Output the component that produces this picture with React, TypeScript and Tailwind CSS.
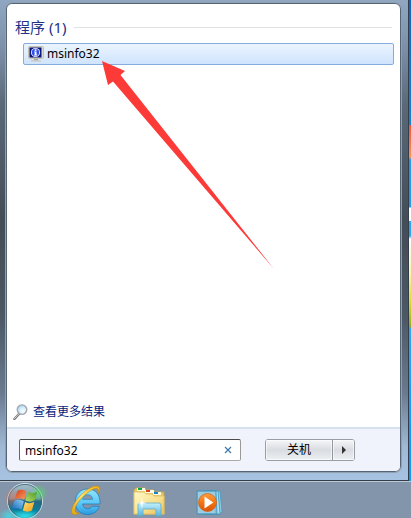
import { useState } from "react";

const uiFont = "font-['Noto_Sans','Noto_Sans_CJK_SC',sans-serif]";

function SystemInfoIcon() {
  return (
    <svg width="16" height="16" viewBox="0 0 16 16" aria-hidden="true" className="shrink-0">
      <rect x="0.5" y="0.5" width="15" height="12" rx="1" fill="#dcd9cf" stroke="#c3c0b4" />
      <rect x="1.5" y="1.5" width="12" height="10" fill="#0a1478" />
      <circle cx="7.5" cy="6.5" r="4.6" fill="#eef2ff" />
      <circle cx="7.5" cy="6.5" r="3.7" fill="#3050f0" />
      <rect x="6.7" y="3.4" width="1.8" height="1.5" fill="#fff" />
      <path d="M6.1 5.6h2.4v3h.7v1H6v-1h.8v-2h-.7z" fill="#fff" />
      <path d="M6 13h4v1.4H6z" fill="#aaa799" />
      <path d="M3 14.2h10v1.3H3z" fill="#c9c6bb" />
    </svg>
  );
}

function MagnifierIcon() {
  return (
    <svg width="16" height="16" viewBox="0 0 16 16" aria-hidden="true" className="shrink-0">
      <defs>
        <radialGradient id="lens" cx="0.6" cy="0.65" r="0.7">
          <stop offset="0" stopColor="#ffffff" />
          <stop offset="0.5" stopColor="#d3ecfc" />
          <stop offset="1" stopColor="#9ccbf0" />
        </radialGradient>
      </defs>
      <path d="M6 10 1.4 15" stroke="#777" strokeWidth="2.4" strokeLinecap="round" />
      <path d="M5.6 10.2 1.5 14.6" stroke="#d8d8d8" strokeWidth="0.9" strokeLinecap="round" />
      <circle cx="9" cy="5.6" r="4.8" fill="url(#lens)" stroke="#a2a7ad" strokeWidth="1.3" />
    </svg>
  );
}

function StartOrb() {
  return (
    <svg width="48" height="36" viewBox="0 0 48 36" aria-hidden="true">
      <defs>
        <linearGradient id="orb" x1="0" y1="0" x2="0" y2="1">
          <stop offset="0" stopColor="#a7bfca" />
          <stop offset="0.42" stopColor="#7698a5" />
          <stop offset="0.5" stopColor="#2a6580" />
          <stop offset="0.75" stopColor="#087f9b" />
          <stop offset="1" stopColor="#2ed3de" />
        </linearGradient>
        <radialGradient id="glowGreen">
          <stop offset="0" stopColor="#4ee85c" stopOpacity="0.65" />
          <stop offset="1" stopColor="#4ee85c" stopOpacity="0" />
        </radialGradient>
        <radialGradient id="glowRed">
          <stop offset="0" stopColor="#e27864" stopOpacity="0.6" />
          <stop offset="1" stopColor="#e27864" stopOpacity="0" />
        </radialGradient>
        <radialGradient id="glowCyan">
          <stop offset="0" stopColor="#31edf4" stopOpacity="0.7" />
          <stop offset="1" stopColor="#31edf4" stopOpacity="0" />
        </radialGradient>
        <linearGradient id="flagRed" x1="0" y1="0" x2="1" y2="1">
          <stop offset="0" stopColor="#d83b1b" />
          <stop offset="1" stopColor="#f8a15d" />
        </linearGradient>
        <linearGradient id="flagGreen" x1="1" y1="0" x2="0" y2="1">
          <stop offset="0" stopColor="#4b9b20" />
          <stop offset="1" stopColor="#b8dc6a" />
        </linearGradient>
        <linearGradient id="flagBlue" x1="0" y1="1" x2="1" y2="0">
          <stop offset="0" stopColor="#1662bd" />
          <stop offset="1" stopColor="#8fd0f4" />
        </linearGradient>
        <linearGradient id="flagYellow" x1="1" y1="1" x2="0" y2="0">
          <stop offset="0" stopColor="#f39b13" />
          <stop offset="1" stopColor="#ffe478" />
        </linearGradient>
      </defs>
      <ellipse cx="9" cy="34" rx="11" ry="8" fill="url(#glowCyan)" />
      <circle cx="25" cy="19" r="17.5" fill="url(#orb)" stroke="#d5e2e8" strokeWidth="1" />
      <circle cx="25" cy="19" r="16.6" fill="none" stroke="#356479" strokeWidth="0.8" />
      <ellipse cx="13" cy="16" rx="10" ry="11" fill="url(#glowRed)" />
      <ellipse cx="39" cy="11" rx="9" ry="9" fill="url(#glowGreen)" />
      <ellipse cx="25" cy="35" rx="13" ry="8" fill="url(#glowCyan)" />
      <path d="M17.2 9.2C20 7.2 23 7.5 26.5 9.3L24.2 17.8C20.5 15.8 17.5 15.7 14.7 17.4Z" fill="url(#flagRed)" />
      <path d="M27.8 10C31 11.5 34 11.6 37 10L34.7 18.3C31.5 20.2 28.4 20 25.4 18.5Z" fill="url(#flagGreen)" />
      <path d="M14.3 19C17.2 17.2 20.6 17.5 23.8 19.3L21.6 27.8C18.2 26 15 25.8 11.8 27.6Z" fill="url(#flagBlue)" />
      <path d="M25.1 20C28.2 21.6 31.4 21.7 34.3 19.8L32 28.2C29 30.2 26 30 22.8 28.5Z" fill="url(#flagYellow)" />
    </svg>
  );
}

function BrowserIcon() {
  return (
    <svg width="32" height="34" viewBox="0 0 32 34" aria-hidden="true">
      <defs>
        <linearGradient id="letter" x1="0" y1="0" x2="0" y2="1">
          <stop offset="0" stopColor="#92e4fd" />
          <stop offset="0.55" stopColor="#5cc8f6" />
          <stop offset="1" stopColor="#2b9be0" />
        </linearGradient>
        <linearGradient id="halo" x1="0" y1="1" x2="1" y2="0">
          <stop offset="0" stopColor="#e2a407" />
          <stop offset="0.5" stopColor="#ffe569" />
          <stop offset="1" stopColor="#eead0d" />
        </linearGradient>
      </defs>
      <path d="M30 20H12.5c.5 3 2.4 4.6 5 4.6 2 0 3.5-.8 4.4-2.3h7.4C27.6 27.5 23.7 30.5 17.5 30.5 9.9 30.5 5.2 25.4 5.2 18S10.2 5 17.6 5C25.4 5 30.5 10.4 30 20Z" fill="url(#letter)" stroke="#1879bb" strokeWidth="0.7" />
      <path d="M12.7 15.4h10c-.3-3-2.2-4.7-5-4.7s-4.6 1.7-5 4.7Z" fill="#8496aa" stroke="#2586c1" strokeWidth="0.6" />
      <path d="M28.7 9.8C30.4 6 30.8 1.4 25.5 2.1 17 3.2 5.3 15.2 2.2 24.1c-2.3 6.7 1.7 8.4 7.8 4.5-7 1.7-6.1-4.5-1.7-10.5C13.3 11.2 21.2 5.3 25.4 4.6c2.9-.5 3.5 1.5 3.3 5.2Z" fill="url(#halo)" stroke="#ba8109" strokeWidth="0.5" />
    </svg>
  );
}

function ExplorerIcon() {
  return (
    <svg width="34" height="32" viewBox="0 0 34 32" aria-hidden="true">
      <defs>
        <linearGradient id="folder" x1="0" y1="0" x2="1" y2="1">
          <stop offset="0" stopColor="#fff9c9" />
          <stop offset="0.6" stopColor="#f7df8b" />
          <stop offset="1" stopColor="#e7bd56" />
        </linearGradient>
        <linearGradient id="stand" x1="0" y1="0" x2="0" y2="1">
          <stop offset="0" stopColor="#c4effc" />
          <stop offset="1" stopColor="#57b4db" />
        </linearGradient>
      </defs>
      <path d="M2 4 4 2h9l1 2h7l1 2h10v22H2Z" fill="#e8c568" stroke="#c7a34a" />
      <path d="M5 2h8v3H5z" fill="#fffce4" />
      <path d="M6 2h4v2H6z" fill="#0ca847" />
      <path d="M13 4h9v3h-9z" fill="#fffce4" />
      <path d="M14 4h4v2h-4z" fill="#cf4427" />
      <path d="M21 6h8v3h-8z" fill="#fffce4" />
      <path d="M22 6h4v2h-4z" fill="#1684ca" />
      <path d="M2 6h10l2 2h6l2 2h10v18H2Z" fill="url(#folder)" stroke="#e3c36d" />
      <path d="M7 17h20q2 0 2 3v10h-5v-6q0-1-1-1H12q-1 0-1 1v6H6V20q0-3 1-3Z" fill="url(#stand)" stroke="#64a9c4" strokeWidth="0.8" />
      <path d="m10 11 .7 5 4.3 1-4.3 1-.7 5-.9-5-4.1-1 4.1-1Z" fill="#fff" fillOpacity="0.9" />
    </svg>
  );
}

function PlayerIcon() {
  return (
    <svg width="30" height="28" viewBox="0 0 30 28" aria-hidden="true">
      <defs>
        <linearGradient id="play" x1="0" y1="0" x2="0" y2="1">
          <stop offset="0" stopColor="#ff9e43" />
          <stop offset="0.5" stopColor="#f47510" />
          <stop offset="1" stopColor="#d95209" />
        </linearGradient>
      </defs>
      <path d="M10 1h14l2 21-3 2H10Z" fill="#8fcfe6" stroke="#4a98bd" strokeWidth="0.8" />
      <path d="M7 1h15l2 23H7Z" fill="#b3e0f0" stroke="#3c94bd" strokeWidth="0.8" />
      <path d="M1 1h19l1 23H1Z" fill="#78bddb" stroke="#3a91bb" strokeWidth="0.8" />
      <path d="M2 2h17v21H2Z" fill="#9bcce1" />
      <circle cx="11.5" cy="12.5" r="9" fill="url(#play)" stroke="#d65c0a" strokeWidth="0.7" />
      <path d="m8.5 6.5 8.8 6-8.8 6Z" fill="#fff" />
    </svg>
  );
}

function Pointer() {
  return (
    <svg width="174" height="210" viewBox="0 0 174 210" aria-hidden="true" className="pointer-events-none absolute top-15 left-[101px]">
      <path d="M1 1 24 11 19.5 15 173 209 12 21.5 7 25Z" fill="#fc3a38" />
    </svg>
  );
}

export default function App() {
  const [query, setQuery] = useState("msinfo32");

  return (
    <div className={`flex h-screen flex-col overflow-hidden text-xs text-black ${uiFont}`}>
      <div className="flex min-h-0 flex-1">
        <main className="relative flex min-w-0 flex-1 flex-col border-r border-b border-[#343d49] bg-[linear-gradient(#90a7c2_0%,#7c90a8_10%,#5a6877_22%,#434d57_46%,#4c5864_66%,#6a7b90_82%,#a0b8d4_93%,#a7c3e2_100%)] pt-[3px] pr-[7px] pb-2 pl-1.5">
          <div className="flex min-h-0 flex-1 flex-col overflow-hidden rounded-md border border-[#566575] bg-white outline outline-[#8fa0b1]">
            <section className="flex flex-1 flex-col pt-[11px]">
              <div className="flex h-6 items-center gap-2 px-2">
                <h1 className="text-[15px] leading-6 whitespace-nowrap text-[#1e3287]">程序 (1)</h1>
                <span className="h-px flex-1 bg-[#e1e1e1]" />
              </div>
              <button
                type="button"
                className="mx-1.5 mt-1 ml-4 flex h-[22px] items-center gap-[3px] rounded-xs border border-[#84acdd] bg-linear-to-b from-[#ebf4fe] to-[#cfe4fe] pl-1"
              >
                <SystemInfoIcon />
                <span>msinfo32</span>
              </button>
              <a href="#results" className="mt-auto mb-[5px] ml-1.5 flex h-5 items-center gap-1 self-start text-[#061d7c]">
                <MagnifierIcon />
                <span>查看更多结果</span>
              </a>
            </section>
            <footer className="flex h-11 shrink-0 items-center gap-6 border-t-2 border-[#d5e1ef] bg-[#f0f3fb] pl-3">
              <div className="flex h-[22px] w-[222px] items-center rounded-xs border border-t-[#4b4b4b] border-r-[#999] border-b-[#aaa] border-l-[#666] bg-white">
                <input
                  aria-label="搜索程序和文件"
                  value={query}
                  onChange={(event) => setQuery(event.target.value)}
                  className="h-full min-w-0 flex-1 bg-transparent pl-[5px] outline-none"
                />
                <button type="button" aria-label="清除" onClick={() => setQuery("")} className="flex h-5 w-6 items-center justify-center">
                  <svg width="8" height="8" viewBox="0 0 8 8" aria-hidden="true">
                    <path d="m1 1 6 6M7 1 1 7" stroke="#3e78ad" strokeWidth="1.2" />
                  </svg>
                </button>
              </div>
              <div className="flex h-[22px] w-[90px] rounded-[3px] border border-[#9a9da3] bg-linear-to-b from-[#f5f6f8] via-[#d9dce1] to-[#eef0f3]">
                <button type="button" className="flex-1 border-r border-[#92959b] leading-5 shadow-[inset_0_0_0_1px_#ffffff99]">
                  关机
                </button>
                <button type="button" aria-label="更多关机选项" className="flex w-[21px] items-center justify-center shadow-[inset_0_0_0_1px_#ffffff99]">
                  <svg width="4" height="8" viewBox="0 0 4 8" aria-hidden="true">
                    <path d="M0 0 4 4 0 8Z" fill="#333" />
                  </svg>
                </button>
              </div>
            </footer>
          </div>
          <Pointer />
        </main>
        <div className="w-0.5 shrink-0 bg-[linear-gradient(#086ac0_0,#1683d4_125px,#f5533a_125px,#fa934e_157px,#209be9_160px,#209be9_207px,#fff_208px,#fff_221px,#28a5f1_221px,#28a5f1_236px,#fff_239px,#f9f9aa_273px,#d8dd2b_303px,#91a91a_327px,#28a8f7_328px,#0c9bf7_450px)]" />
      </div>
      <nav aria-label="任务栏" className="flex h-[37px] shrink-0 items-start border-t border-[#bdcbd6] bg-[#8395aa]">
        <button type="button" aria-label="开始">
          <StartOrb />
        </button>
        <button type="button" aria-label="浏览器" className="ml-[22px] pt-0.5">
          <BrowserIcon />
        </button>
        <button type="button" aria-label="资源管理器" className="ml-[30px] pt-1">
          <ExplorerIcon />
        </button>
        <button type="button" aria-label="媒体播放器" className="ml-[30px] pt-2">
          <PlayerIcon />
        </button>
      </nav>
    </div>
  );
}
